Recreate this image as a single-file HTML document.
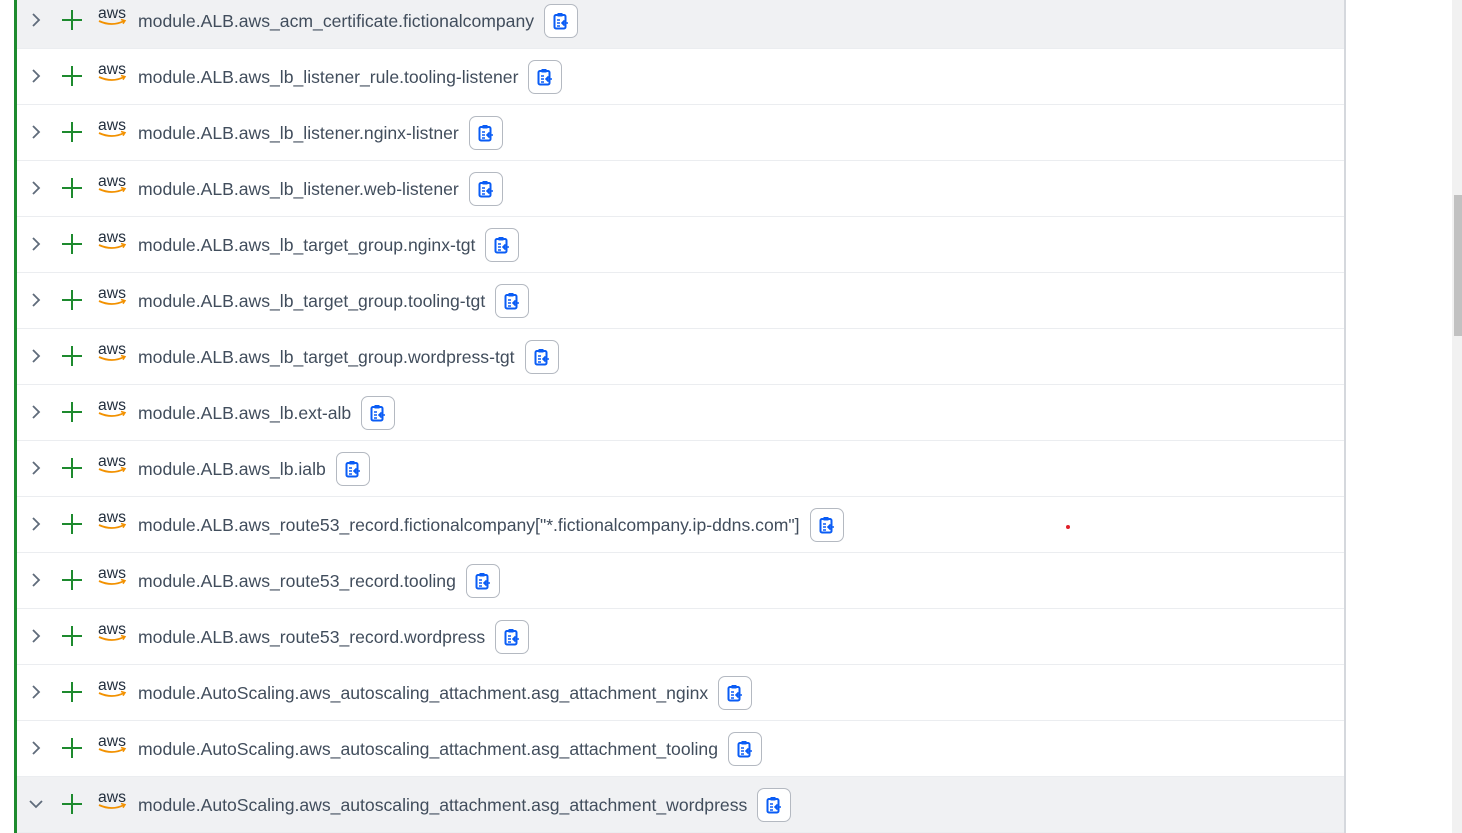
<!DOCTYPE html>
<html><head><style>
body{margin:0;width:1462px;height:833px;overflow:hidden;background:#fff;font-family:"Liberation Sans",sans-serif;position:relative}
.panel{position:absolute;left:14px;top:0;width:1327px;height:833px;border-left:3px solid #1d8a2e;border-right:2px solid #d5d8dd;overflow:hidden}
.rows{position:absolute;top:-7px;left:0;right:0}
.row{height:55px;border-bottom:1px solid #ebedf0;position:relative}
.row.hl{background:#f0f1f3}
.chev{position:absolute;left:12px;top:20px}
.plus{position:absolute;left:45px;top:17px}
.aws{position:absolute;left:81px;top:13px}
.txt{position:absolute;left:121px;top:11px;display:flex;align-items:center;font-size:17.6px;color:#414d5c;white-space:nowrap}
.btn{margin-left:10px;width:32px;height:32px;border:1px solid #b4b9c1;border-radius:7px;background:#fff;display:flex;align-items:center;justify-content:center}
.track{position:absolute;left:1452px;top:0;width:10px;height:833px;background:#f1f1f1}
.thumb{position:absolute;left:1454px;top:195px;width:8px;height:141px;background:#c1c1c1}
</style></head><body>
<div class="panel"><div class="rows" id="r"></div></div>
<div class="track"></div><div class="thumb"></div>
<div style="position:absolute;left:1066px;top:525px;width:4px;height:4px;border-radius:50%;background:#e0202a"></div>
<script>
var n=["module.ALB.aws_acm_certificate.fictionalcompany","module.ALB.aws_lb_listener_rule.tooling-listener","module.ALB.aws_lb_listener.nginx-listner","module.ALB.aws_lb_listener.web-listener","module.ALB.aws_lb_target_group.nginx-tgt","module.ALB.aws_lb_target_group.tooling-tgt","module.ALB.aws_lb_target_group.wordpress-tgt","module.ALB.aws_lb.ext-alb","module.ALB.aws_lb.ialb","module.ALB.aws_route53_record.fictionalcompany[\"*.fictionalcompany.ip-ddns.com\"]","module.ALB.aws_route53_record.tooling","module.ALB.aws_route53_record.wordpress","module.AutoScaling.aws_autoscaling_attachment.asg_attachment_nginx","module.AutoScaling.aws_autoscaling_attachment.asg_attachment_tooling","module.AutoScaling.aws_autoscaling_attachment.asg_attachment_wordpress"];
var h="";
n.forEach(function(t,i){var last=i==n.length-1;
var chev=last?'<svg class="chev" width="14" height="14" viewBox="0 0 14 14"><path d="M1 4l6 6 6-6" fill="none" stroke="#5f6b7a" stroke-width="1.8"/></svg>':'<svg class="chev" width="14" height="14" viewBox="0 0 14 14"><path d="M4 1l6 6-6 6" fill="none" stroke="#5f6b7a" stroke-width="1.8"/></svg>';
h+='<div class="row'+((i==0||last)?' hl':'')+'">'+chev+
'<svg class="plus" width="20" height="20" viewBox="0 0 20 20"><path d="M10 0v20M0 10h20" stroke="#1d8a2e" stroke-width="2"/></svg>'+
'<svg class="aws" width="30" height="22" viewBox="0 0 30 22"><text x="0" y="12" font-family="Liberation Sans,sans-serif" font-size="15.5" fill="#232f3e" textLength="28" lengthAdjust="spacingAndGlyphs">aws</text><path d="M1 15 Q14 21 26 15" fill="none" stroke="#f29100" stroke-width="1.8"/><path d="M23 13.5l4 1.2-2 3" fill="none" stroke="#f29100" stroke-width="1.5"/></svg>'+
'<div class="txt"><span>'+t.replace(/"/g,'&quot;')+'</span><div class="btn"><svg width="16" height="18" viewBox="0 0 16 18"><rect x="1.5" y="3" width="11" height="13.5" rx="1.5" fill="none" stroke="#0a5cf5" stroke-width="2"/><rect x="4.5" y="1" width="5" height="3.5" fill="#0a5cf5"/><path d="M4 8h3M4 11h3M4 14h3M15 11h-6M11.5 8.5L9 11l2.5 2.5" fill="none" stroke="#0a5cf5" stroke-width="1.6"/></svg></div></div></div>';});
document.getElementById('r').innerHTML=h;
</script>
</body></html>
